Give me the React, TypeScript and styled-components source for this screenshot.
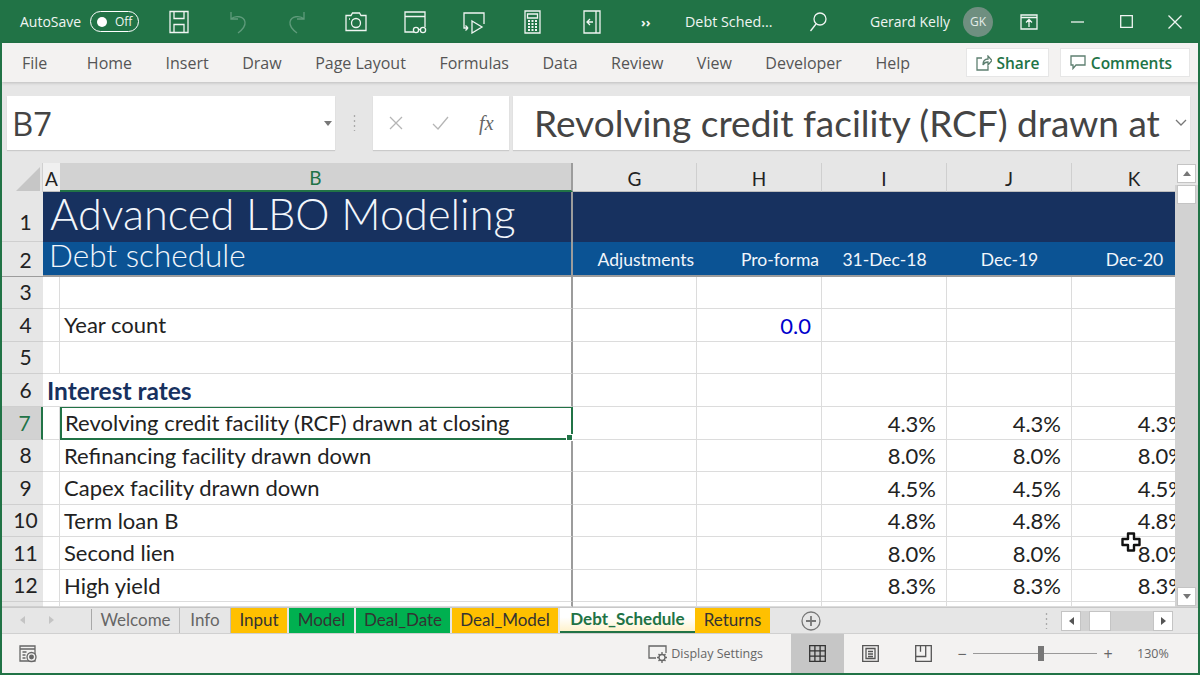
import React from 'react';
import styled, { createGlobalStyle } from 'styled-components';

const GREEN = '#217346';
const CELL_FONT = 'Lato, "Open Sans", sans-serif';
const UI_FONT = '"Open Sans", "Noto Sans", sans-serif';
const COLS = '41px 17px 513px 124px 125px 125px 125px 125px';

const Global = createGlobalStyle`
  html, body { margin: 0; padding: 0; background: #fff; }
  * { box-sizing: border-box; }
`;

const Win = styled.div`
  position: relative;
  width: 1200px;
  height: 675px;
  display: flex;
  flex-direction: column;
  overflow: hidden;
  background: #e6e6e6;
  border: 2px solid ${GREEN};
  border-top: 0;
  font-family: ${UI_FONT};
`;

/* title bar */
const TitleBar = styled.div`
  height: 43px;
  margin: 0 -2px;
  flex: none;
  display: flex;
  align-items: center;
  background: ${GREEN};
  color: #f0f5f2;
  font-size: 14px;
  & > * {
    flex: none;
  }
`;
const AutoSave = styled.span`
  margin-left: 20px;
  width: 70px;
`;
const Toggle = styled.div`
  width: 49px;
  height: 21px;
  border: 1.5px solid #fff;
  border-radius: 11px;
  display: flex;
  align-items: center;
  padding-left: 6px;
  gap: 8px;
  font-size: 12px;
  &::before {
    content: '';
    width: 10px;
    height: 10px;
    border-radius: 50%;
    background: #fff;
  }
`;
const Quick = styled.div`
  display: flex;
  margin-left: 10px;
`;
const QuickSlot = styled.div`
  width: 59px;
  height: 43px;
  display: flex;
  align-items: center;
  justify-content: center;
`;
const More = styled.span`
  margin-left: 20px;
  font-size: 13px;
  font-weight: 700;
  width: 44px;
`;
const DocName = styled.span`
  width: 124px;
  white-space: nowrap;
  font-size: 14.3px;
`;
const User = styled.span`
  margin-left: 43px;
  width: 93px;
  white-space: nowrap;
`;
const Avatar = styled.div`
  width: 30px;
  height: 30px;
  border-radius: 50%;
  background: #6f8f80;
  display: flex;
  align-items: center;
  justify-content: center;
  font-size: 12px;
  color: #e4ece8;
`;
const WinButtons = styled.div`
  display: flex;
  margin-left: 12px;
`;
const WinSlot = styled.div`
  width: 48.5px;
  height: 43px;
  display: flex;
  align-items: center;
  justify-content: center;
`;
const Ico = styled.svg`
  display: block;
  fill: none;
  stroke: currentColor;
  stroke-width: 1.3;
  flex: none;
`;
const Faded = styled.div`
  color: #5f9b7b;
  display: flex;
`;

/* ribbon tabs */
const Ribbon = styled.div`
  height: 39px;
  flex: none;
  display: flex;
  align-items: center;
  padding-left: 20px;
  background: #f3f2f1;
  box-shadow: 0 1px 3px rgba(0, 0, 0, 0.18);
  position: relative;
  z-index: 1;
`;
const RibbonTab = styled.span`
  font-size: 16px;
  color: #555;
  margin-right: 33.5px;
  white-space: nowrap;
  &:first-child {
    margin-right: 39.5px;
  }
`;
const RibbonButton = styled.div<{ $w: number; $first?: boolean }>`
  width: ${(p) => p.$w}px;
  height: 29px;
  margin-left: ${(p) => (p.$first ? 'auto' : '11px')};
  padding-right: ${(p) => (p.$first ? 0 : 8)}px;
  background: #fff;
  border: 1px solid #e6e6e6;
  display: flex;
  align-items: center;
  justify-content: center;
  gap: 5px;
  color: ${GREEN};
  font-size: 15.5px;
  font-weight: 600;
`;
const ShareMark = styled.div`
  color: #5d7f70;
  display: flex;
`;
const RibbonEnd = styled.div`
  width: 8px;
  flex: none;
`;

/* formula bar */
const FormulaBar = styled.div`
  height: 81px;
  flex: none;
  display: flex;
  padding: 14px 8px 0 5px;
  background: #e6e6e6;
`;
const Field = styled.div<{ $w?: number }>`
  height: 54px;
  background: #fff;
  box-shadow: 0 1px 1px rgba(0, 0, 0, 0.12);
  display: flex;
  align-items: center;
  flex: ${(p) => (p.$w ? 'none' : '1')};
  width: ${(p) => (p.$w ? `${p.$w}px` : 'auto')};
  min-width: 0;
`;
const NameText = styled.span`
  font-size: 33px;
  color: #444;
  margin-left: 5px;
  flex: 1;
`;
const Caret = styled.i`
  width: 0;
  height: 0;
  border: 4px solid transparent;
  border-top: 5px solid #777;
  border-bottom: 0;
  margin-right: 3px;
`;
const Grip = styled.div`
  width: 38px;
  display: flex;
  justify-content: center;
  align-items: center;
  color: #aaa;
  height: 54px;
`;
const FxSlot = styled.div`
  width: 46px;
  display: flex;
  justify-content: center;
  color: #b5b5b5;
`;
const Fx = styled.span`
  font-family: 'Liberation Serif', serif;
  font-style: italic;
  font-size: 20px;
  color: #666;
`;
const FormulaText = styled.span`
  flex: 1;
  margin-left: 21px;
  padding-bottom: 2px;
  font-family: ${CELL_FONT};
  font-size: 37px;
  color: #444;
  white-space: nowrap;
  overflow: hidden;
`;
const FormulaGap = styled.div`
  width: 4px;
  flex: none;
`;
const Chevron = styled.div`
  width: 18px;
  color: #777;
  display: flex;
  justify-content: center;
`;

/* sheet */
const Main = styled.div`
  height: 444px;
  flex: none;
  display: flex;
`;
const Sheet = styled.div`
  position: relative;
  width: 1173px;
  overflow: hidden;
  background: #fff;
  font-family: ${CELL_FONT};
  color: #222;
`;
const Row = styled.div<{ $h: number }>`
  display: grid;
  grid-template-columns: ${COLS};
  grid-template-rows: ${(p) => p.$h}px;
  height: ${(p) => p.$h}px;
`;
const Corner = styled.div`
  background: #e6e6e6;
  border-right: 1px solid #d0d0d0;
  position: relative;
  &::after {
    content: '';
    position: absolute;
    right: 2px;
    bottom: 1px;
    border-style: solid;
    border-width: 0 0 24px 24px;
    border-color: transparent transparent #c6c6c6 transparent;
  }
`;
const ColHead = styled.div<{ $active?: boolean; $freeze?: boolean }>`
  background: ${(p) => (p.$active ? '#d2d2d2' : '#e6e6e6')};
  color: ${(p) => (p.$active ? GREEN : '#222')};
  border-right: ${(p) => (p.$freeze ? '2px solid #9c9c9c' : '1px solid #cfcfcf')};
  border-bottom: ${(p) => (p.$active ? `2px solid ${GREEN}` : '1px solid #bdbdbd')};
  font-size: 19px;
  line-height: 24px;
  display: flex;
  align-items: flex-end;
  justify-content: center;
  overflow: hidden;
`;
const ColHeadA = styled(ColHead)`
  background: #f0f0f0;
  border-right: 0;
`;
const RowHead = styled.div<{ $active?: boolean; $divider?: boolean; $tall?: boolean }>`
  background: ${(p) => (p.$active ? '#d2d2d2' : '#e6e6e6')};
  color: ${(p) => (p.$active ? GREEN : '#222')};
  border-bottom: 1px solid ${(p) => (p.$divider ? '#9c9c9c' : '#cfcfcf')};
  border-right: ${(p) => (p.$active ? `2px solid ${GREEN}` : '0')};
  font-size: 21px;
  display: flex;
  align-items: flex-end;
  justify-content: center;
  line-height: 31px;
  padding: 0 0 ${(p) => (p.$tall ? 4 : 1)}px 6px;
  overflow: hidden;
`;
const Cell = styled.div<{ $freeze?: boolean }>`
  border-bottom: 1px solid #dcdcdc;
  border-right: ${(p) => (p.$freeze ? '2px solid #9c9c9c' : '1px solid #dcdcdc')};
  display: flex;
  align-items: center;
  font-size: 22px;
  line-height: 28px;
  padding: 0 4px;
  white-space: nowrap;
  position: relative;
  min-width: 0;
`;
const Num = styled(Cell)<{ $blue?: boolean }>`
  justify-content: flex-end;
  padding: 1px 10px 0 0;
  color: ${(p) => (p.$blue ? '#0000cc' : '#222')};
`;
const Heading = styled.span`
  color: #17315f;
  font-weight: 700;
  font-size: 24.5px;
  margin-left: 0;
  padding-top: 2px;
`;
const HeadingCell = styled(Cell)`
  border-right: 0;
  overflow: visible;
  z-index: 1;
`;
const Selected = styled(Cell)`
  border: 2px solid ${GREEN};
  border-top-width: 1px;
  padding-left: 3px;
  z-index: 1;
  &::after {
    content: '';
    position: absolute;
    right: -2px;
    bottom: -3px;
    width: 5px;
    height: 5px;
    background: ${GREEN};
    border: 1px solid #fff;
  }
`;
const Band = styled.div<{ $color: string; $freeze?: boolean; $line?: boolean }>`
  background: ${(p) => p.$color};
  color: #f2f6fb;
  display: flex;
  align-items: center;
  white-space: nowrap;
  border-right: ${(p) => (p.$freeze ? '2px solid #9c9c9c' : '0')};
  border-bottom: ${(p) => (p.$line ? '2px solid #9c9c9c' : '0')};
  min-width: 0;
`;
const Title = styled.span`
  font-size: 43.3px;
  line-height: 44px;
  font-weight: 300;
  margin-left: -10px;
  padding-bottom: 9px;
`;
const Sub = styled.span`
  font-size: 31.5px;
  line-height: 32px;
  font-weight: 300;
  margin-left: -11px;
  padding-bottom: 8px;
`;
const BandLabel = styled(Band)<{ $align: string }>`
  font-size: 17.5px;
  justify-content: ${(p) => p.$align};
  padding: 2px 3px 0;
`;
const Pointer = styled.div`
  position: absolute;
  left: 1119px;
  top: 369px;
  z-index: 2;
`;

/* vertical scrollbar */
const VScroll = styled.div`
  width: 23px;
  flex: none;
  display: flex;
  flex-direction: column;
  background: #d2d2d2;
  padding-bottom: 1px;
`;
const VTop = styled.div`
  background: #e6e6e6;
  padding: 1px 2px 2px;
  height: 22px;
`;
const ScrollBtn = styled.div`
  height: 19px;
  background: #fff;
  border: 1px solid #c4c4c4;
  display: flex;
  align-items: center;
  justify-content: center;
`;
const VThumb = styled.div`
  height: 19px;
  margin: 0 2px;
  background: #fff;
  border: 1px solid #c4c4c4;
`;
const VSpacer = styled.div`
  flex: 1;
`;
const VBottom = styled(ScrollBtn)`
  margin: 0 2px;
`;
const Tri = styled.i<{ $dir: 'up' | 'down' | 'left' | 'right'; $color?: string }>`
  width: 0;
  height: 0;
  border: 4px solid transparent;
  ${(p) => {
    const c = p.$color || '#777';
    if (p.$dir === 'up') return `border-bottom: 5px solid ${c}; border-top: 0;`;
    if (p.$dir === 'down') return `border-top: 5px solid ${c}; border-bottom: 0;`;
    if (p.$dir === 'left') return `border-right: 5px solid ${c}; border-left: 0;`;
    return `border-left: 5px solid ${c}; border-right: 0;`;
  }}
`;

/* sheet tabs */
const TabBar = styled.div`
  height: 27px;
  flex: none;
  display: flex;
  align-items: stretch;
  background: #e6e6e6;
  border-top: 1px solid #c8c8c8;
  border-bottom: 1px solid #d0d0d0;
  font-family: ${CELL_FONT};
`;
const TabNav = styled.div`
  width: 90px;
  display: flex;
  align-items: center;
  gap: 24px;
  padding-left: 18px;
  border-right: 1px solid #a8a8a8;
  margin: 1px 0 3px;
`;
const SheetTab = styled.div<{ $w: number; $tone?: 'orange' | 'green' | 'active' }>`
  width: ${(p) => p.$w}px;
  flex: none;
  display: flex;
  align-items: center;
  justify-content: center;
  font-size: 17px;
  padding-bottom: 2px;
  margin-right: ${(p) => (p.$tone && p.$tone !== 'active' ? 2 : 0)}px;
  background: ${(p) =>
    p.$tone === 'orange'
      ? '#ffc000'
      : p.$tone === 'green'
        ? '#00b050'
        : p.$tone === 'active'
          ? 'linear-gradient(#ffffff 40%, #fff2cc)'
          : '#e6e6e6'};
  color: ${(p) => (p.$tone === 'active' ? GREEN : p.$tone ? '#333' : '#666')};
  font-weight: ${(p) => (p.$tone === 'active' ? 700 : 400)};
  border-bottom: ${(p) => (p.$tone === 'active' ? `2px solid ${GREEN}` : '0')};
  border-right: ${(p) => (p.$tone ? '0' : '1px solid #bdbdbd')};
`;
const AddSlot = styled.div`
  margin-left: 29px;
  display: flex;
  align-items: center;
  color: #777;
`;
const HScroll = styled.div`
  margin-left: auto;
  display: flex;
  align-items: center;
  margin-right: 25px;
`;
const Dots = styled.div`
  margin-right: 13px;
  color: #aaa;
  display: flex;
`;
const HBtn = styled.div`
  width: 20px;
  height: 20px;
  background: #fff;
  border: 1px solid #c4c4c4;
  display: flex;
  align-items: center;
  justify-content: center;
`;
const HTrack = styled.div`
  width: 72px;
  height: 20px;
  background: #d2d2d2;
  padding-left: 8px;
`;
const HThumb = styled.div`
  width: 22px;
  height: 20px;
  background: #fff;
  border: 1px solid #c4c4c4;
`;

/* status bar */
const Status = styled.div`
  flex: 1;
  min-height: 0;
  display: flex;
  align-items: center;
  background: #f3f2f1;
  padding-left: 17px;
  color: #666;
`;
const DisplaySet = styled.div`
  margin-left: auto;
  display: flex;
  align-items: center;
  gap: 3px;
  font-size: 12.5px;
`;
const ViewBtn = styled.div<{ $on?: boolean }>`
  width: 53px;
  height: 100%;
  display: flex;
  align-items: center;
  justify-content: center;
  background: ${(p) => (p.$on ? '#c6c6c6' : 'transparent')};
  color: ${(p) => (p.$on ? '#333' : '#555')};
`;
const Views = styled.div`
  height: 100%;
  margin-left: 28px;
  display: flex;
`;
const Zoom = styled.div`
  display: flex;
  align-items: center;
  margin-left: 6px;
  font-size: 12.5px;
`;
const ZoomMark = styled.span`
  width: 12px;
  text-align: center;
  font-size: 16px;
`;
const Slider = styled.div`
  position: relative;
  width: 124px;
  height: 1px;
  margin: 0 5px;
  background: #999;
`;
const SliderKnob = styled.i`
  position: absolute;
  left: 65px;
  top: -7px;
  width: 6px;
  height: 15px;
  background: #777;
`;
const ZoomPct = styled.span`
  margin-left: 23px;
  width: 30px;
  margin-right: 31px;
`;

const rates = [
  ['Revolving credit facility (RCF) drawn at closing', '4.3%'],
  ['Refinancing facility drawn down', '8.0%'],
  ['Capex facility drawn down', '4.5%'],
  ['Term loan B', '4.8%'],
  ['Second lien', '8.0%'],
  ['High yield', '8.3%'],
];
const rowHeights = [33, 32, 33, 32, 33, 32];

const EmptyRow = ({ n, h, label, heading, pro }: { n: string; h: number; label?: string; heading?: string; pro?: string }) => (
  <Row $h={h}>
    <RowHead>{n}</RowHead>
    {heading ? (
      <HeadingCell>
        <Heading>{heading}</Heading>
      </HeadingCell>
    ) : (
      <Cell />
    )}
    <Cell $freeze>{label}</Cell>
    <Cell />
    {pro ? <Num $blue>{pro}</Num> : <Cell />}
    <Cell />
    <Cell />
    <Cell />
  </Row>
);

export default function App() {
  return (
    <Win>
      <Global />
      <TitleBar>
        <AutoSave>AutoSave</AutoSave>
        <Toggle>Off</Toggle>
        <Quick>
          <QuickSlot>
            <Ico width="20" height="24" viewBox="0 0 20 24">
              <path d="M1 1.500h18v21H1zM5 1.500v7h10v-7M5 22.500v-8h10v8" />
            </Ico>
          </QuickSlot>
          <QuickSlot>
            <Faded>
              <Ico width="18" height="24" viewBox="0 0 18 24">
                <path d="M2 2v7h7M2 9c4-4 13-3 14 3 .6 4-3 8-7 11" />
              </Ico>
            </Faded>
          </QuickSlot>
          <QuickSlot>
            <Faded>
              <Ico width="18" height="24" viewBox="0 0 18 24">
                <path d="M16 2v7H9M16 9C12 5 3 6 2 12c-.6 4 3 8 7 11" />
              </Ico>
            </Faded>
          </QuickSlot>
          <QuickSlot>
            <Ico width="22" height="20" viewBox="0 0 22 20">
              <path d="M1 3.500h5l1.500-2.500h7L16 3.500h5v15H1z" />
              <circle cx="11" cy="11" r="4.500" />
              <path d="M4 7h1" />
            </Ico>
          </QuickSlot>
          <QuickSlot>
            <Ico width="24" height="24" viewBox="0 0 24 24">
              <path d="M11 22H2V2h20v15M2 6.500h20" />
              <circle cx="13" cy="20" r="2.600" />
              <circle cx="20" cy="20" r="2.600" />
              <path d="M15.600 19.500h1.800" />
            </Ico>
          </QuickSlot>
          <QuickSlot>
            <Ico width="24" height="24" viewBox="0 0 24 24">
              <path d="M6 18H2V3h20v11M6 18l-2.500-2.500M6 18l-2.500 2.500" />
              <path d="M10 11l10 6-10 6z" />
            </Ico>
          </QuickSlot>
          <QuickSlot>
            <Ico width="17" height="24" viewBox="0 0 17 24">
              <path d="M1 1h15v22H1zM3.500 4h10v4h-10z" />
              <path d="M4 11h2M7.500 11h2M11 11h2M4 14h2M7.500 14h2M11 14h2M4 17h2M7.500 17h2M11 17h2M4 20h2M7.500 20h2M11 20h2" strokeWidth="1.800" />
            </Ico>
          </QuickSlot>
          <QuickSlot>
            <Ico width="18" height="24" viewBox="0 0 18 24">
              <path d="M1 1h16v22H1zM13 1v22M10 12H4M7 9l-3 3 3 3" />
            </Ico>
          </QuickSlot>
        </Quick>
        <More>››</More>
        <DocName>Debt Sched...</DocName>
        <Ico width="18" height="20" viewBox="0 0 18 20">
          <circle cx="11" cy="7" r="6" />
          <path d="M7 12l-5.500 7" />
        </Ico>
        <User>Gerard Kelly</User>
        <Avatar>GK</Avatar>
        <WinButtons>
          <WinSlot>
            <Ico width="18" height="16" viewBox="0 0 18 16">
              <path d="M1 1h16v14H1zM1 3.500h16M9 13V6M6 8.500L9 5.500l3 3" />
            </Ico>
          </WinSlot>
          <WinSlot>
            <Ico width="13" height="2" viewBox="0 0 13 2">
              <path d="M0 1h13" />
            </Ico>
          </WinSlot>
          <WinSlot>
            <Ico width="13" height="13" viewBox="0 0 13 13">
              <path d="M.7.7h11.600v11.600H.7z" />
            </Ico>
          </WinSlot>
          <WinSlot>
            <Ico width="14" height="14" viewBox="0 0 14 14">
              <path d="M.5.5l13 13M13.500.5l-13 13" />
            </Ico>
          </WinSlot>
        </WinButtons>
      </TitleBar>

      <Ribbon>
        {['File', 'Home', 'Insert', 'Draw', 'Page Layout', 'Formulas', 'Data', 'Review', 'View', 'Developer', 'Help'].map((t) => (
          <RibbonTab key={t}>{t}</RibbonTab>
        ))}
        <RibbonButton $w={83} $first>
          <ShareMark>
            <Ico width="16" height="16" viewBox="0 0 16 16">
              <path d="M6 3H1v12h11v-4M7 10c0-4 2-6 5-6V1l4 4.500L12 10V7c-2 0-4 1-5 3z" />
            </Ico>
          </ShareMark>
          Share
        </RibbonButton>
        <RibbonButton $w={130}>
          <ShareMark>
            <Ico width="16" height="15" viewBox="0 0 16 15">
              <path d="M1 1h14v9H6l-3 3.500V10H1z" />
            </Ico>
          </ShareMark>
          Comments
        </RibbonButton>
        <RibbonEnd />
      </Ribbon>

      <FormulaBar>
        <Field $w={328}>
          <NameText>B7</NameText>
          <Caret />
        </Field>
        <Grip>
          <Ico width="3" height="16" viewBox="0 0 3 16" strokeDasharray="2 3" strokeWidth="2">
            <path d="M1.500 0v16" />
          </Ico>
        </Grip>
        <Field $w={136}>
          <FxSlot>
            <Ico width="14" height="14" viewBox="0 0 14 14" strokeWidth="1.800">
              <path d="M1 1l12 12M13 1L1 13" />
            </Ico>
          </FxSlot>
          <FxSlot>
            <Ico width="17" height="14" viewBox="0 0 17 14" strokeWidth="2">
              <path d="M1 8l5 5L16 1" />
            </Ico>
          </FxSlot>
          <FxSlot>
            <Fx>fx</Fx>
          </FxSlot>
        </Field>
        <FormulaGap />
        <Field>
          <FormulaText>Revolving credit facility (RCF) drawn at</FormulaText>
          <Chevron>
            <Ico width="12" height="8" viewBox="0 0 12 8" strokeWidth="1.800">
              <path d="M1 1l5 5 5-5" />
            </Ico>
          </Chevron>
        </Field>
      </FormulaBar>

      <Main>
        <Sheet>
          <Row $h={29}>
            <Corner />
            <ColHeadA>A</ColHeadA>
            <ColHead $active $freeze>B</ColHead>
            {['G', 'H', 'I', 'J', 'K'].map((c) => (
              <ColHead key={c}>{c}</ColHead>
            ))}
          </Row>
          <Row $h={50}>
            <RowHead $tall>1</RowHead>
            <Band $color="#17315f" />
            <Band $color="#17315f" $freeze>
              <Title>Advanced LBO Modeling</Title>
            </Band>
            <Band $color="#17315f" />
            <Band $color="#17315f" />
            <Band $color="#17315f" />
            <Band $color="#17315f" />
            <Band $color="#17315f" />
          </Row>
          <Row $h={35}>
            <RowHead $divider>2</RowHead>
            <Band $color="#0b5394" $line />
            <Band $color="#0b5394" $freeze $line>
              <Sub>Debt schedule</Sub>
            </Band>
            <BandLabel $color="#0b5394" $line $align="flex-end">Adjustments</BandLabel>
            <BandLabel $color="#0b5394" $line $align="flex-end">Pro-forma</BandLabel>
            <BandLabel $color="#0b5394" $line $align="center">31-Dec-18</BandLabel>
            <BandLabel $color="#0b5394" $line $align="center">Dec-19</BandLabel>
            <BandLabel $color="#0b5394" $line $align="center">Dec-20</BandLabel>
          </Row>
          <EmptyRow n="3" h={32} />
          <EmptyRow n="4" h={33} label="Year count" pro="0.0" />
          <EmptyRow n="5" h={32} />
          <EmptyRow n="6" h={33} heading="Interest rates" />
          {rates.map(([label, rate], i) => (
            <Row key={label} $h={rowHeights[i]}>
              <RowHead $active={i === 0}>{i + 7}</RowHead>
              <Cell />
              {i === 0 ? <Selected $freeze>{label}</Selected> : <Cell $freeze>{label}</Cell>}
              <Cell />
              <Cell />
              <Num>{rate}</Num>
              <Num>{rate}</Num>
              <Num>{rate}</Num>
            </Row>
          ))}
          <Row $h={5}>
            <RowHead />
            <Cell />
            <Cell $freeze />
            <Cell />
            <Cell />
            <Cell />
            <Cell />
            <Cell />
          </Row>
          <Pointer>
            <svg width="20" height="20" viewBox="0 0 20 20">
              <path d="M7 1.500h6v5.500h5.500v6H13v5.500H7V13H1.500V7H7z" fill="#fff" stroke="#111" strokeWidth="2.400" strokeLinejoin="round" />
            </svg>
          </Pointer>
        </Sheet>
        <VScroll>
          <VTop>
            <ScrollBtn>
              <Tri $dir="up" />
            </ScrollBtn>
          </VTop>
          <VThumb />
          <VSpacer />
          <VBottom>
            <Tri $dir="down" />
          </VBottom>
        </VScroll>
      </Main>

      <TabBar>
        <TabNav>
          <Tri $dir="left" $color="#c4c4c4" />
          <Tri $dir="right" $color="#c4c4c4" />
        </TabNav>
        <SheetTab $w={88}>Welcome</SheetTab>
        <SheetTab $w={51}>Info</SheetTab>
        <SheetTab $w={56} $tone="orange">Input</SheetTab>
        <SheetTab $w={65} $tone="green">Model</SheetTab>
        <SheetTab $w={94} $tone="green">Deal_Date</SheetTab>
        <SheetTab $w={106} $tone="orange">Deal_Model</SheetTab>
        <SheetTab $w={135} $tone="active">Debt_Schedule</SheetTab>
        <SheetTab $w={75} $tone="orange">Returns</SheetTab>
        <AddSlot>
          <Ico width="20" height="20" viewBox="0 0 20 20">
            <circle cx="10" cy="10" r="9" />
            <path d="M10 5v10M5 10h10" strokeWidth="1.800" />
          </Ico>
        </AddSlot>
        <HScroll>
          <Dots>
            <Ico width="3" height="16" viewBox="0 0 3 16" strokeDasharray="2 3" strokeWidth="2">
              <path d="M1.500 0v16" />
            </Ico>
          </Dots>
          <HBtn>
            <Tri $dir="left" $color="#555" />
          </HBtn>
          <HTrack>
            <HThumb />
          </HTrack>
          <HBtn>
            <Tri $dir="right" $color="#555" />
          </HBtn>
        </HScroll>
      </TabBar>

      <Status>
        <Ico width="19" height="18" viewBox="0 0 19 18">
          <path d="M1 1h15v15H1zM1 4h15M3.500 7h4M3.500 10h3M3.500 13h3" />
          <circle cx="12.500" cy="12" r="4.500" fill="#f3f2f1" />
          <circle cx="12.500" cy="12" r="1.800" fill="#666" />
        </Ico>
        <DisplaySet>
          <Ico width="20" height="18" viewBox="0 0 20 18">
            <path d="M8 13H1V1h17v7" />
            <circle cx="14" cy="12.500" r="3" />
            <path d="M14 7v2M14 16v2M9 12.500h2M17 12.500h2M10.500 9l1.500 1.500M16 14.500l1.500 1.500M17.500 9L16 10.500M12 14.500L10.500 16" />
          </Ico>
          Display Settings
        </DisplaySet>
        <Views>
          <ViewBtn $on>
            <Ico width="17" height="17" viewBox="0 0 17 17">
              <path d="M.7.7h15.600v15.600H.7zM.7 5.900h15.600M.7 11.100h15.600M5.900.7v15.600M11.100.7v15.600" />
            </Ico>
          </ViewBtn>
          <ViewBtn>
            <Ico width="17" height="17" viewBox="0 0 17 17">
              <path d="M.7.7h15.600v15.600H.7zM4 3.500h9v10H4zM6 6.500h5M6 9h5M6 11.500h5" />
            </Ico>
          </ViewBtn>
          <ViewBtn>
            <Ico width="17" height="17" viewBox="0 0 17 17">
              <path d="M.7.7h15.600v15.600H.7zM.7 11.500h10V.7M5.500.7v6" />
            </Ico>
          </ViewBtn>
        </Views>
        <Zoom>
          <ZoomMark>−</ZoomMark>
          <Slider>
            <SliderKnob />
          </Slider>
          <ZoomMark>+</ZoomMark>
          <ZoomPct>130%</ZoomPct>
        </Zoom>
      </Status>
    </Win>
  );
}
